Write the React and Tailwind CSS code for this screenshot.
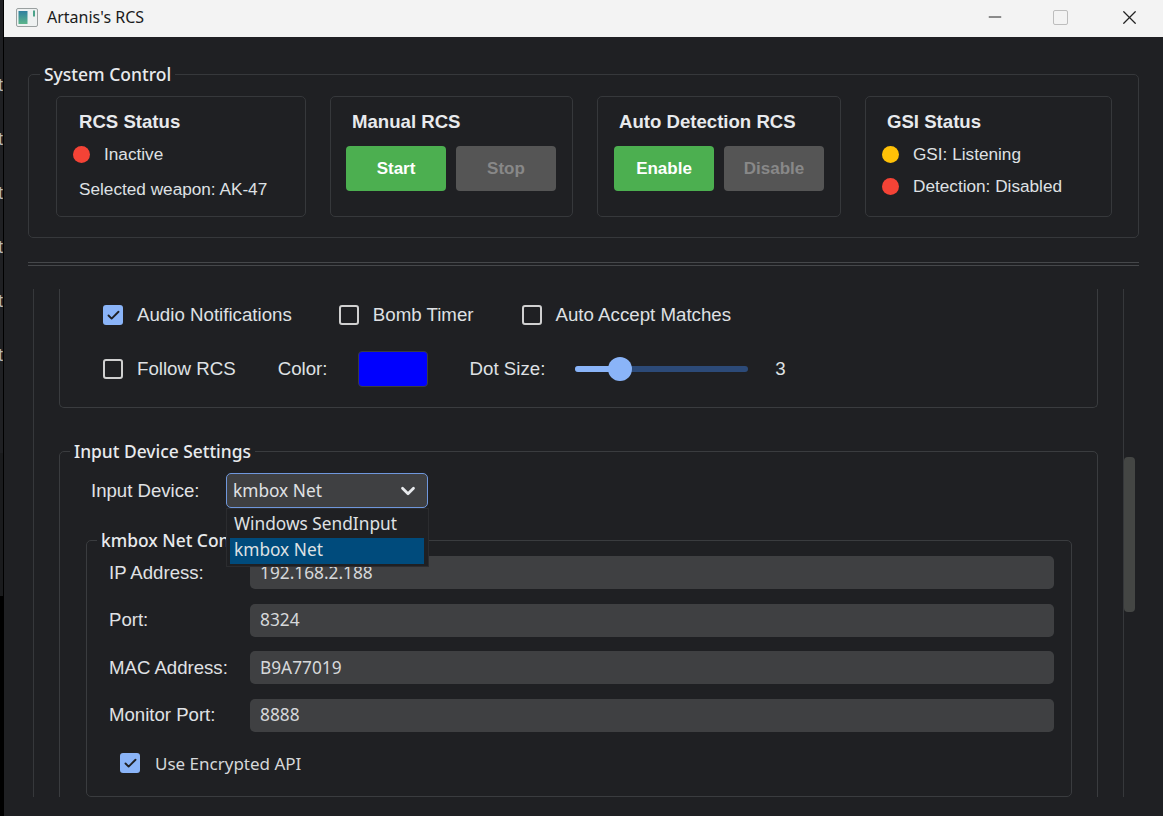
import React from "react";
import { Check, ChevronDown, Minus, X } from "lucide-react";

const arial = "font-['Liberation_Sans',Arial,sans-serif]";
const segoe = "font-['Noto_Sans','Open_Sans',sans-serif]";

function Dot({ color }) {
  return <span className={`w-[17px] h-[17px] rounded-full shrink-0 ${color}`}></span>;
}

function Btn({ children, on }) {
  return (
    <button className={`w-[100px] h-[45px] rounded-[4px] text-[17px] font-bold ${arial} ${on ? "bg-[#4caf50] text-white" : "bg-[#555555] text-[#888888]"}`}>
      {children}
    </button>
  );
}

function Card({ title, width, titleClass, children }) {
  return (
    <div className={`${width} h-[121px] border border-[#36383b] rounded-[5px] ${arial}`}>
      <h3 className={`text-[18.6px] font-bold leading-[22px] mt-[14px] text-[#e8eaed] ${titleClass}`}>{title}</h3>
      {children}
    </div>
  );
}

function Box({ checked, className = "" }) {
  return checked ? (
    <span className={`w-[20px] h-[20px] rounded-[3px] bg-[#8ab4f8] flex items-center justify-center shrink-0 ${className}`}>
      <Check size={15} strokeWidth={3} className="text-[#1f2023]" />
    </span>
  ) : (
    <span className={`w-[20px] h-[20px] rounded-[3px] border-2 border-[#d0d0d0] shrink-0 ${className}`}></span>
  );
}

function Field({ label, value }) {
  return (
    <div className="flex items-center h-[33px]">
      <span className={`w-[141px] text-[18.6px] text-[#e0e2e5] ${arial}`}>{label}</span>
      <div className={`w-[804px] h-full rounded-[5px] bg-[#3f4042] pl-[10px] flex items-center text-[17.3px] text-[#d6d8da] ${segoe}`}>{value}</div>
    </div>
  );
}

export default function App() {
  return (
    <div className="w-[1163px] h-[816px] flex overflow-hidden bg-[#000000]">
      {/* sliver of whatever sits behind the window */}
      <div className="w-[4px] shrink-0 border-r border-black flex flex-col overflow-hidden">
        <div className={`h-[453px] bg-[#1f2023] flex flex-col items-end pt-[74px] gap-[32px] text-[18px] leading-[22px] text-[#b8b8b8] ${arial}`}>
          {["t", "t", "t", "t", "t", "t"].map((c, i) => (
            <span key={i}>{c}</span>
          ))}
        </div>
        <div className="h-[143px] bg-[#1a1b1d]"></div>
      </div>

      <div className="flex-1 flex flex-col border-r border-[#c8c8c8] bg-[#1f2023] relative">
        {/* title bar */}
        <div className={`h-[37px] shrink-0 bg-[#f3f3f3] flex items-center pb-[3px] text-[#1b1b1b] ${segoe}`}>
          <svg width="22" height="19" viewBox="0 0 22 19" className="ml-[12px] mr-[9px]">
            <defs>
              <linearGradient id="appIcon" x1="0" y1="0" x2="0" y2="1">
                <stop offset="0" stopColor="#2f7f9f" />
                <stop offset="1" stopColor="#5bb58a" />
              </linearGradient>
            </defs>
            <rect x="0.5" y="0.5" width="21" height="18" rx="1.5" fill="#eef1f1" stroke="#9aa0a0" />
            <rect x="2.5" y="3" width="9" height="13" fill="url(#appIcon)" />
            <rect x="17" y="2.5" width="2" height="6" fill="#4aa38a" />
          </svg>
          <span className="text-[16px]">Artanis's RCS</span>
          <div className="ml-auto flex items-center text-[#222222]">
            <Minus size={20} strokeWidth={1.2} className="mr-[48px]" />
            <span className="w-[15px] h-[15px] rounded-[2px] border border-[#bdbdbd] mr-[50px]"></span>
            <X size={23} strokeWidth={1.3} className="mr-[22px]" />
          </div>
        </div>

        <div className="px-[24px] pt-[26px] text-[#e8eaed]">
          <fieldset className="w-[1111px] border border-[#36383b] rounded-[5px] h-[175px]">
            <legend className={`ml-[11px] px-[4px] text-[17.5px] leading-[22px] font-medium ${segoe}`}>System Control</legend>
            <div className="flex gap-[24px] pl-[27px] mt-[11px]">
              <Card title="RCS Status" width="w-[250px]" titleClass="ml-[22px]">
                <div className="flex items-center mt-[11px] ml-[16px] text-[17.2px] leading-[20px] text-[#dfe1e4]">
                  <Dot color="bg-[#f44336]" />
                  <span className="ml-[14px]">Inactive</span>
                </div>
                <p className="ml-[22px] mt-[15px] text-[17.2px] leading-[20px] text-[#dfe1e4]">Selected weapon: AK-47</p>
              </Card>
              <Card title="Manual RCS" width="w-[243px]" titleClass="ml-[21px]">
                <div className="flex gap-[10px] ml-[15px] mt-[13px]">
                  <Btn on>Start</Btn>
                  <Btn>Stop</Btn>
                </div>
              </Card>
              <Card title="Auto Detection RCS" width="w-[244px]" titleClass="ml-[21px]">
                <div className="flex gap-[10px] ml-[16px] mt-[13px]">
                  <Btn on>Enable</Btn>
                  <Btn>Disable</Btn>
                </div>
              </Card>
              <Card title="GSI Status" width="w-[247px]" titleClass="ml-[21px]">
                <div className="flex items-center mt-[11px] ml-[16px] text-[17.2px] leading-[20px] text-[#dfe1e4]">
                  <Dot color="bg-[#ffc107]" />
                  <span className="ml-[14px]">GSI: Listening</span>
                </div>
                <div className="flex items-center mt-[12px] ml-[16px] text-[17.2px] leading-[20px] text-[#dfe1e4]">
                  <Dot color="bg-[#f44336]" />
                  <span className="ml-[14px]">Detection: Disabled</span>
                </div>
              </Card>
            </div>
          </fieldset>

          <div className="w-[1111px] h-[4px] mt-[24px] border-y border-[#45474a]"></div>

          {/* scrolled settings area, cut at both ends */}
          <div className="relative mt-[23px] ml-[5px] w-[1091px] h-[508px] overflow-hidden border-x border-[#36383b] px-[25px]">
            <div className={`h-[119px] border-x border-b border-[#3a3c3f] rounded-b-[5px] pl-[43px] pt-[16px] text-[18.7px] text-[#dfe1e4] ${arial}`}>
              <div className="flex items-center h-[20px]">
                <Box checked />
                <span className="ml-[14px]">Audio Notifications</span>
                <Box className="ml-[47px]" />
                <span className="ml-[14px]">Bomb Timer</span>
                <Box className="ml-[48px]" />
                <span className="ml-[14px]">Auto Accept Matches</span>
              </div>
              <div className="flex items-center mt-[26px] h-[36px]">
                <Box />
                <span className="ml-[14px]">Follow RCS</span>
                <span className="ml-[42px]">Color:</span>
                <span className="ml-[30px] w-[70px] h-[36px] rounded-[4px] bg-[#0000ff] border border-[#3a3c3f]"></span>
                <span className="ml-[42px]">Dot Size:</span>
                <div className="ml-[30px] w-[173px] h-[6px] rounded-full bg-[#2c4a78] relative">
                  <div className="w-[45px] h-full rounded-full bg-[#8ab4f8]"></div>
                  <span className="absolute left-[33px] top-[-9px] w-[24px] h-[24px] rounded-full bg-[#8ab4f8]"></span>
                </div>
                <span className="ml-[27px]">3</span>
              </div>
            </div>

            <fieldset className="mt-[32px] border border-[#3a3c3f] rounded-[5px] pb-[40px]">
              <legend className={`ml-[10px] px-[4px] text-[17.4px] leading-[22px] font-medium ${segoe}`}>Input Device Settings</legend>
              <div className="relative flex items-center mt-[11px] ml-[31px] h-[35px]">
                <span className={`w-[135px] text-[18.6px] text-[#e0e2e5] ${arial}`}>Input Device:</span>
                <div className={`w-[202px] h-[35px] rounded-[5px] border border-[#6f97dc] bg-[#3f4042] pl-[6px] pr-[8px] flex items-center justify-between text-[17.3px] text-[#e0e2e5] ${segoe}`}>
                  kmbox Net
                  <ChevronDown size={22} strokeWidth={3} className="text-[#e8eaed]" />
                </div>
                {/* open dropdown */}
                <div className={`absolute z-10 left-[135px] top-[35px] w-[203px] h-[59px] bg-[#1f2023] border border-[#2b2c2f] pl-[3px] pr-[4px] pt-[3px] text-[17.3px] text-[#dfe1e4] ${segoe}`}>
                  <div className="h-[26px] pl-[4px] leading-[23px]">Windows SendInput</div>
                  <div className="h-[26px] pl-[4px] leading-[23px] bg-[#004b7c]">kmbox Net</div>
                </div>
              </div>

              <fieldset className="mt-[21px] ml-[26px] w-[986px] h-[268px] border border-[#3a3c3f] rounded-[5px]">
                <legend className={`ml-[10px] px-[4px] text-[17.4px] leading-[22px] font-medium ${segoe}`}>kmbox Net Configuration</legend>
                <div className="flex flex-col gap-[14.5px] mt-[5px] pl-[22px]">
                  <Field label="IP Address:" value="192.168.2.188" />
                  <Field label="Port:" value="8324" />
                  <Field label="MAC Address:" value="B9A77019" />
                  <Field label="Monitor Port:" value="8888" />
                </div>
                <div className={`flex items-center mt-[19px] ml-[33px] text-[17px] text-[#d6d8da] ${segoe}`}>
                  <Box checked />
                  <span className="ml-[15px]">Use Encrypted API</span>
                </div>
              </fieldset>
            </fieldset>
          </div>
        </div>

        {/* scrollbar thumb sits in the gutter */}
        <div className="absolute left-[1120px] top-[457px] w-[11px] h-[155px] rounded-[4px] bg-[#444644]"></div>
      </div>
    </div>
  );
}
